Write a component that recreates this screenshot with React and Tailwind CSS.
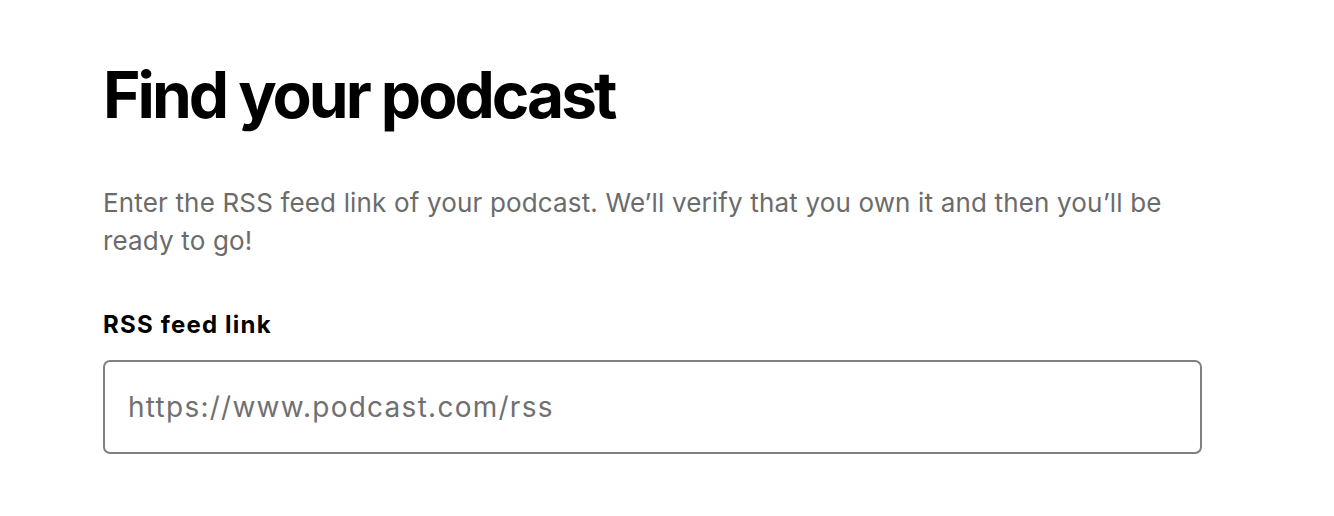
export default function App() {
  return (
    <div className="min-h-screen w-full bg-white font-['Inter',sans-serif]">
      <main className="px-[103px] pt-[59px]">
        <h1 className="text-[64px] font-bold leading-[72px] tracking-[-0.047em] text-black">Find your podcast</h1>
        <p className="mt-[53px] max-w-[1080px] text-[26px] leading-[38px] tracking-[0.006em] text-[#6b6b6b]">
          Enter the RSS feed link of your podcast. We’ll verify that you own it and then you’ll be ready to go!
        </p>
        <form className="mt-[50px]" onSubmit={(e) => e.preventDefault()}>
          <label htmlFor="rss" className="block text-[24px] font-bold leading-[30px] tracking-[0.05em] text-black">RSS feed link</label>
          <input
            id="rss"
            type="text"
            placeholder="https://www.podcast.com/rss"
            className="mt-[20px] h-[94px] w-[1099px] rounded-[7px] border-2 border-[#808080] bg-white px-[23px] text-[28px] tracking-[0.045em] text-black placeholder:text-[#707070] focus:outline-none"
          />
        </form>
      </main>
    </div>
  );
}
